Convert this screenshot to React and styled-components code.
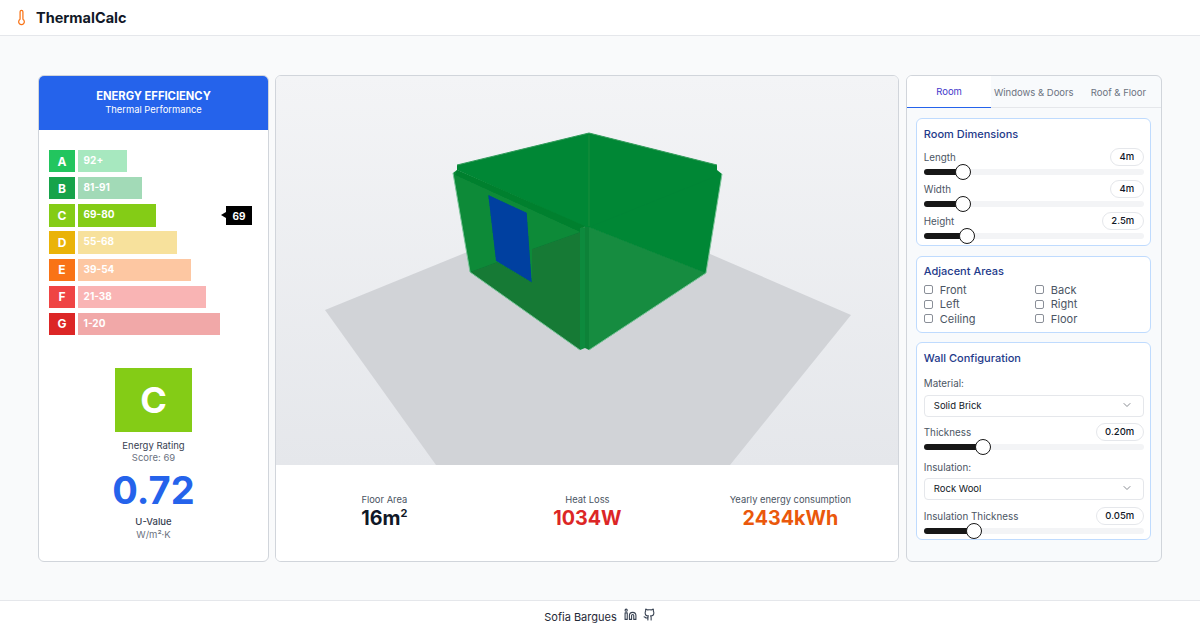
import React from 'react';
import styled, { createGlobalStyle } from 'styled-components';
import { Thermometer, Linkedin, Github, ChevronDown } from 'lucide-react';

const GlobalStyle = createGlobalStyle`
html, body { margin: 0; padding: 0; height: 100%; }
body { font-family: Inter, "Liberation Sans", sans-serif; background: #f9fafb; color: #111827; }
* { box-sizing: border-box; }
`;

const Page = styled.div`
width: 1200px;
height: 630px;
display: flex;
flex-direction: column;
overflow: hidden;
`;

const Header = styled.header`
height: 36px;
flex: none;
display: flex;
align-items: center;
gap: 6px;
padding: 0 0 0 13px;
background: #fff;
border-bottom: 1px solid #e5e7eb;
`;

const Brand = styled.span`
font-size: 14.5px;
font-weight: 700;
color: #111827;
line-height: 34px;
`;

const Main = styled.main`
flex: 1;
display: grid;
grid-template-columns: 231px 624px 256px;
column-gap: 6.4px;
padding: 39px 38px 38px;
min-height: 0;
`;

const Card = styled.section`
background: ${p => p.$bg || '#fff'};
border: 1px solid #d1d5db;
border-radius: 6px;
overflow: hidden;
display: flex;
flex-direction: column;
`;

const RatingHead = styled.div`
height: 54px;
flex: none;
background: #2563eb;
color: #fff;
text-align: center;
padding-top: 13px;
`;

const RatingTitle = styled.div`
font-size: 11.2px;
font-weight: 700;
line-height: 14px;
`;

const RatingSub = styled.div`
font-size: 9.4px;
line-height: 13px;
`;

const Scale = styled.div`
position: relative;
display: flex;
flex-direction: column;
gap: 4.85px;
margin: 20px 0 0 10px;
width: 171px;
`;

const ScaleRow = styled.div`
height: 22.3px;
display: flex;
gap: 2.6px;
`;

const Letter = styled.div`
width: 26px;
flex: none;
background: ${p => p.$color};
color: #fff;
font-size: 12px;
font-weight: 700;
display: flex;
align-items: center;
justify-content: center;
`;

const BarTrack = styled.div`
width: 142.2px;
flex: none;
`;

const BarBox = styled.div`
position: relative;
height: 100%;
`;

const Bar = styled.div`
height: 100%;
background: ${p => p.$color};
opacity: ${p => (p.$active ? 1 : 0.4)};
`;

const BarLabel = styled.div`
position: absolute;
inset: 0;
color: #fff;
font-size: 10px;
font-weight: 700;
line-height: 21px;
padding-left: 6px;
`;

const Marker = styled.div`
position: absolute;
left: 177px;
top: 56px;
width: 26px;
height: 19px;
background: #000;
color: #fff;
font-size: 10px;
font-weight: 700;
display: flex;
align-items: center;
justify-content: center;
&::before {
  content: '';
  position: absolute;
  left: -5px;
  top: 6px;
  border-style: solid;
  border-width: 3.5px 5px 3.5px 0;
  border-color: transparent #000 transparent transparent;
}
`;

const Summary = styled.div`
display: flex;
flex-direction: column;
align-items: center;
margin-top: 33px;
`;

const GradeBox = styled.div`
width: 77px;
height: 64px;
background: #84cc16;
color: #fff;
font-size: 36px;
font-weight: 700;
display: flex;
align-items: center;
justify-content: center;
margin-bottom: 7px;
`;

const SummaryLabel = styled.div`
font-size: 9.5px;
line-height: 13px;
font-weight: ${p => (p.$strong ? 500 : 400)};
color: #374151;
margin-bottom: ${p => (p.$strong ? 1 : 0)}px;
`;

const SummaryNote = styled.div`
font-size: 9.5px;
line-height: 12px;
color: #6b7280;
`;

const BigValue = styled.div`
font-size: 38px;
font-weight: 700;
line-height: 46px;
color: #2563eb;
margin: 3px 0 2px;
`;

const Scene = styled.div`
flex: 1;
min-height: 0;
background: linear-gradient(180deg, #f3f4f6 0%, #e5e7eb 100%);
`;

const SceneSvg = styled.svg`
display: block;
width: 100%;
height: 100%;
`;

const Stats = styled.div`
height: 96px;
flex: none;
background: #fff;
display: grid;
grid-template-columns: repeat(3, 1fr);
padding: 28px 6.5px 0;
text-align: center;
`;

const StatLabel = styled.div`
font-size: 9.4px;
line-height: 14px;
color: #4b5563;
`;

const StatValue = styled.div`
font-size: 19.7px;
font-weight: 700;
line-height: 22px;
color: ${p => p.$color};
sup { font-size: 11px; line-height: 0; }
`;

const Tabs = styled.div`
display: grid;
grid-template-columns: repeat(3, 1fr);
height: 32px;
flex: none;
border-bottom: 1px solid #e5e7eb;
`;

const Tab = styled.div`
font-size: 9.5px;
display: flex;
align-items: center;
justify-content: center;
color: ${p => (p.$active ? '#4338ca' : '#6b7280')};
background: ${p => (p.$active ? '#fff' : 'transparent')};
border-bottom: ${p => (p.$active ? '1px solid #2563eb' : 'none')};
margin-bottom: -1px;
`;

const Panels = styled.div`
display: flex;
flex-direction: column;
gap: 9.6px;
padding: 10px 10px 0 9px;
`;

const Panel = styled.div`
background: #fff;
border: 1px solid #bfdbfe;
border-radius: 6px;
padding: 0 6px 0 7px;
height: ${p => p.$h}px;
flex: none;
`;

const PanelTitle = styled.h3`
margin: 0 0 ${p => p.$gap || 0}px;
font-size: 11px;
font-weight: 500;
line-height: 14px;
color: #1e3a8a;
padding-top: ${p => p.$top || 8}px;
`;

const SliderBlock = styled.div`
height: ${p => p.$h || 32}px;
margin-top: ${p => p.$top || 0}px;
`;

const SliderTop = styled.div`
display: flex;
justify-content: space-between;
align-items: center;
height: 18px;
`;

const Label = styled.span`
font-size: 9.8px;
color: #4b5563;
`;

const Badge = styled.span`
height: 18px;
padding: 0 8.5px;
border: 1px solid #e5e7eb;
border-radius: 9px;
background: #fff;
font-size: 9.5px;
font-weight: 500;
line-height: 16px;
color: #111827;
`;

const Track = styled.div`
position: relative;
height: 6px;
border-radius: 3px;
background: #f3f4f6;
margin-top: 3px;
`;

const Fill = styled.div`
height: 100%;
border-radius: 3px;
background: #171717;
`;

const Thumb = styled.div`
position: absolute;
top: -5px;
width: 16px;
height: 16px;
margin-left: -8px;
border-radius: 50%;
background: #fff;
border: 1px solid #171717;
`;

const CheckGrid = styled.div`
display: grid;
grid-template-columns: 111px 1fr;
grid-auto-rows: 14.5px;
margin-top: 5px;
`;

const CheckItem = styled.label`
display: flex;
align-items: center;
gap: 7px;
font-size: 11px;
color: #4b5563;
`;

const CheckBox = styled.span`
width: 9px;
height: 9px;
flex: none;
border: 1px solid #8a8f98;
border-radius: 2px;
background: #fff;
`;

const FieldLabel = styled.div`
font-size: 9.8px;
line-height: 14px;
color: #4b5563;
margin-top: ${p => p.$top || 0}px;
`;

const Select = styled.div`
height: 22px;
margin-top: ${p => p.$top || 4}px;
padding: 0 10px 2px 9px;
border: 1px solid #e5e7eb;
border-radius: 4px;
display: flex;
align-items: center;
justify-content: space-between;
font-size: 9.5px;
color: #111827;
svg { opacity: 0.5; }
`;

const Footer = styled.footer`
height: 30px;
flex: none;
background: #fff;
border-top: 1px solid #e5e7eb;
display: flex;
align-items: center;
justify-content: center;
gap: 5px;
font-size: 11px;
color: #1f2937;
padding-top: 2px;
`;

const FooterIcons = styled.span`
display: flex;
gap: 6px;
margin: 0 0 4px 2px;
color: #374151;
`;

const grades = [
  { l: 'A', r: '92+', w: 35, c: '#22c55e' },
  { l: 'B', r: '81-91', w: 45, c: '#16a34a' },
  { l: 'C', r: '69-80', w: 55, c: '#84cc16', active: true },
  { l: 'D', r: '55-68', w: 70, c: '#eab308' },
  { l: 'E', r: '39-54', w: 80, c: '#f97316' },
  { l: 'F', r: '21-38', w: 90, c: '#ef4444' },
  { l: 'G', r: '1-20', w: 100, c: '#dc2626' },
];

const Slider = ({ label, value, pct, h, top }) => (
  <SliderBlock $h={h} $top={top}>
    <SliderTop>
      <Label>{label}</Label>
      <Badge>{value}</Badge>
    </SliderTop>
    <Track>
      <Fill style={{ width: `${pct}%` }} />
      <Thumb style={{ left: `${pct}%` }} />
    </Track>
  </SliderBlock>
);

const Room = () => (
  <SceneSvg viewBox="276 76 622 389" preserveAspectRatio="none">
    <defs>
      <filter id="soft" x="-5%" y="-5%" width="110%" height="110%">
        <feGaussianBlur stdDeviation="0.4" />
      </filter>
    </defs>
    <polygon points="590,202 851,315 730,465 436,465 325,310" fill="#d1d3d7" />
    <g filter="url(#soft)">
      {/* ceiling and upper right wall share one tone */}
      <polygon points="457,165 589,133 717,165 717,170 722,174 706,273 589,350 589,227 585,227 457,170" fill="#058735" />
      <polyline points="457,165 589,133 717,165" fill="none" stroke="#2f9c5c" strokeWidth="1" />
      <line x1="589" y1="135" x2="589" y2="226" stroke="#0a8c3b" strokeWidth="1" />
      <line x1="592" y1="226" x2="714" y2="177" stroke="#04833a" strokeWidth="1" opacity="0.4" />
      {/* left wall */}
      <polygon points="453,173 457,170 585,226 580,228 580,350 470,272" fill="#0a8a39" />
      <polygon points="457,170 585,226 580,232 455,175" fill="#05802f" />
      <polygon points="532,249 580,232 580,350 470,272 497,262 532,282" fill="#127a35" />
      <polygon points="488.3,195 526.7,212.7 531.7,282.3 496,260.7" fill="#033fa0" />
      {/* floor seen through the right wall */}
      <polygon points="589,227 706,273 589,350" fill="#128c40" />
      {/* front corner */}
      <polygon points="580,228 585,227 585,348 580,350" fill="#0e8a3c" />
      <polygon points="585,227 589,227 589,350 585,348" fill="#0b8238" />
      {/* pale outer edges */}
      <polyline points="453,173 470,272 580,350" fill="none" stroke="#7cc49a" strokeWidth="1" />
      <polyline points="722,174 706,273 589,350" fill="none" stroke="#7cc49a" strokeWidth="1" />
    </g>
  </SceneSvg>
);

const App = () => (
  <Page>
    <GlobalStyle />
    <Header>
      <Thermometer size={17} color="#f97316" strokeWidth={1.75} />
      <Brand>ThermalCalc</Brand>
    </Header>
    <Main>
      <Card>
        <RatingHead>
          <RatingTitle>ENERGY EFFICIENCY</RatingTitle>
          <RatingSub>Thermal Performance</RatingSub>
        </RatingHead>
        <Scale>
          {grades.map(g => (
            <ScaleRow key={g.l}>
              <Letter $color={g.c}>{g.l}</Letter>
              <BarTrack>
                <BarBox style={{ width: `${g.w}%` }}>
                  <Bar $color={g.c} $active={g.active} />
                  <BarLabel>{g.r}</BarLabel>
                </BarBox>
              </BarTrack>
            </ScaleRow>
          ))}
          <Marker>69</Marker>
        </Scale>
        <Summary>
          <GradeBox>C</GradeBox>
          <SummaryLabel>Energy Rating</SummaryLabel>
          <SummaryNote>Score: 69</SummaryNote>
          <BigValue>0.72</BigValue>
          <SummaryLabel $strong>U-Value</SummaryLabel>
          <SummaryNote>W/m²·K</SummaryNote>
        </Summary>
      </Card>
      <Card>
        <Scene>
          <Room />
        </Scene>
        <Stats>
          <div>
            <StatLabel>Floor Area</StatLabel>
            <StatValue $color="#111827">16m<sup>2</sup></StatValue>
          </div>
          <div>
            <StatLabel>Heat Loss</StatLabel>
            <StatValue $color="#dc2626">1034W</StatValue>
          </div>
          <div>
            <StatLabel>Yearly energy consumption</StatLabel>
            <StatValue $color="#ea580c">2434kWh</StatValue>
          </div>
        </Stats>
      </Card>
      <Card $bg="#f8fafc">
        <Tabs>
          <Tab $active>Room</Tab>
          <Tab>Windows &amp; Doors</Tab>
          <Tab>Roof &amp; Floor</Tab>
        </Tabs>
        <Panels>
          <Panel $h={128}>
            <PanelTitle $gap={7}>Room Dimensions</PanelTitle>
            <Slider label="Length" value="4m" pct={18} />
            <Slider label="Width" value="4m" pct={18} />
            <Slider label="Height" value="2.5m" pct={19.5} />
          </Panel>
          <Panel $h={77}>
            <PanelTitle $top={7}>Adjacent Areas</PanelTitle>
            <CheckGrid>
              {['Front', 'Back', 'Left', 'Right', 'Ceiling', 'Floor'].map(n => (
                <CheckItem key={n}><CheckBox />{n}</CheckItem>
              ))}
            </CheckGrid>
          </Panel>
          <Panel $h={198}>
            <PanelTitle>Wall Configuration</PanelTitle>
            <FieldLabel $top={12}>Material:</FieldLabel>
            <Select>Solid Brick<ChevronDown size={12} /></Select>
            <Slider label="Thickness" value="0.20m" pct={27} h={27} top={6} />
            <FieldLabel $top={11}>Insulation:</FieldLabel>
            <Select $top={3}>Rock Wool<ChevronDown size={12} /></Select>
            <Slider label="Insulation Thickness" value="0.05m" pct={23} h={27} top={7} />
          </Panel>
        </Panels>
      </Card>
    </Main>
    <Footer>
      Sofia Bargues
      <FooterIcons>
        <Linkedin size={13} />
        <Github size={13} />
      </FooterIcons>
    </Footer>
  </Page>
);

export default App;
